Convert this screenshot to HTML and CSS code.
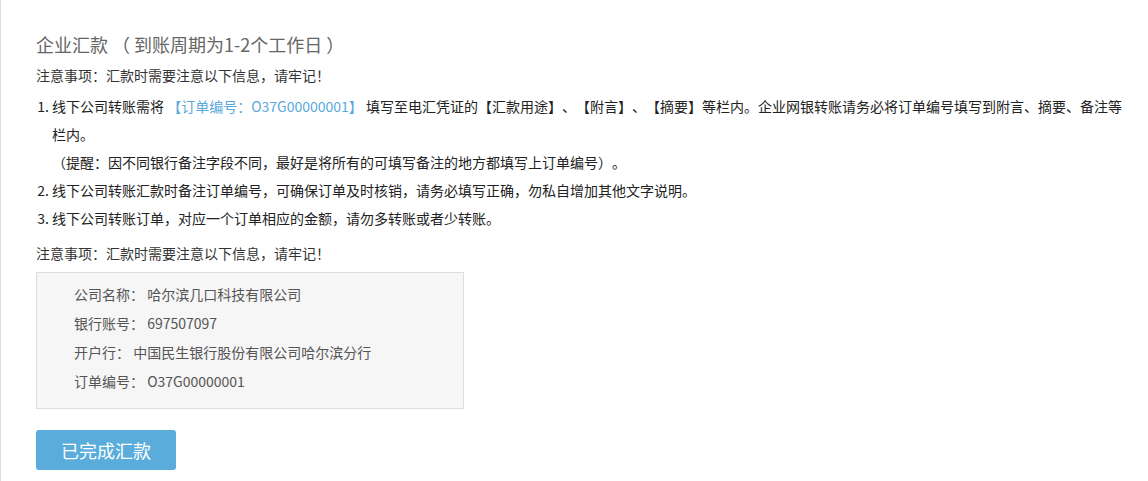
FILE: index.html
```html
<!DOCTYPE html>
<html>

<head>
	<meta charset="UTF-8">
	<title>企业汇款</title>
	<link rel="stylesheet" href="styles.css">
</head>

<body>
	<div id="content">
		<h2 class="title">企业汇款 （ 到账周期为1-2个工作日 ）</h2>
		<p class="tip">注意事项：汇款时需要注意以下信息，请牢记！</p>
		<ol class="rules">
			<li>线下公司转账需将 <span class="code">【订单编号：O37G00000001】</span> 填写至电汇凭证的【汇款用途】、【附言】、【摘要】等栏内。企业网银转账请务必将订单编号填写到附言、摘要、备注等栏内。<br>（提醒：因不同银行备注字段不同，最好是将所有的可填写备注的地方都填写上订单编号）。</li>
			<li>线下公司转账汇款时备注订单编号，可确保订单及时核销，请务必填写正确，勿私自增加其他文字说明。</li>
			<li>线下公司转账订单，对应一个订单相应的金额，请勿多转账或者少转账。</li>
		</ol>
		<p class="tip tip2">注意事项：汇款时需要注意以下信息，请牢记！</p>
		<dl class="account">
			<dd>公司名称： 哈尔滨几口科技有限公司</dd>
			<dd>银行账号： 697507097</dd>
			<dd>开户行： 中国民生银行股份有限公司哈尔滨分行</dd>
			<dd>订单编号： O37G00000001</dd>
		</dl>
		<a href="javascript:;" class="done">已完成汇款</a>
	</div>
</body>

</html>
```

FILE: styles.css
```css
html,
body {
	margin: 0;
	padding: 0;
	height: 100%;
}

body {
	font-family: "Microsoft YaHei", "Noto Sans CJK SC", sans-serif;
	font-size: 14px;
	color: #333;
	background: #fff;
	text-spacing-trim: space-all;
	font-feature-settings: "palt" 0;
}

p,
h2,
ol,
dl,
dd {
	margin: 0;
	padding: 0;
}

a {
	text-decoration: none;
}

#content {
	box-sizing: border-box;
	height: 100%;
	border-left: 1px solid #ddd;
	padding: 29px 20px 0 35px;
}

.title {
	font: 18px/30px "Microsoft YaHei", "Noto Sans CJK SC", sans-serif;
	color: #666;
}

.tip {
	margin-top: 2px;
	line-height: 28px;
	color: #333;
}

.rules {
	margin-top: 3px;
	padding-left: 16px;
	line-height: 28px;
	color: #222;
}

.code {
	color: #5aa9dc;
}

.tip2 {
	margin-top: 7px;
}

.account {
	width: 428px;
	box-sizing: border-box;
	margin-top: 5px;
	padding: 7px 0 12px 37px;
	background: #f6f6f6;
	border: 1px solid #ddd;
	color: #555;
}

.account dd {
	line-height: 29px;
}

.done {
	display: block;
	width: 140px;
	height: 40px;
	margin-top: 21px;
	border-radius: 3px;
	background: #5aacdb;
	color: #fff;
	font-size: 18px;
	line-height: 40px;
	text-align: center;
}
```
